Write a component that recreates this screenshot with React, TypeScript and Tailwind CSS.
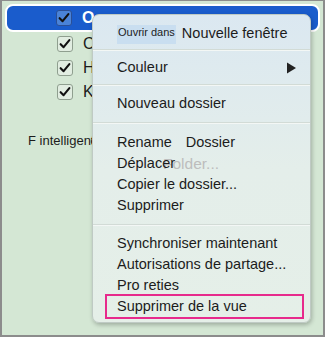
import React from 'react';

const font = { fontFamily: '"Liberation Sans", Arial, sans-serif' };

const CheckBox = ({ active = false }: { active?: boolean }) => (
  <div
    className={
      active
        ? 'w-[16px] h-[16px] rounded-[3px] border border-[#2a4f96] bg-[#4a83d8] flex items-center justify-center'
        : 'w-[16px] h-[16px] rounded-[3px] border border-[#8f9f8f] bg-[#e1ede1] flex items-center justify-center'
    }
  >
    <svg viewBox="0 0 16 16" className="w-[14px] h-[14px]">
      <path
        d="M3 8.2L6.4 11.6L13 3.6"
        fill="none"
        stroke="#111"
        strokeWidth="2.4"
        strokeLinecap="round"
        strokeLinejoin="round"
      />
    </svg>
  </div>
);

const Row = ({ label, h = 'h-[21px]' }: { label: React.ReactNode; h?: string }) => (
  <div className={`${h} flex items-center pl-[24px] text-[14.5px] text-[#1c1c1c] whitespace-nowrap`}>
    {label}
  </div>
);

const Separator = () => <div className="h-[2px] bg-[#d2dbd6] border-b border-[#f3f7f5]" />;

export default function App() {
  return (
    <div
      className="relative w-[325px] h-[337px] overflow-hidden border-2 border-t border-[#8c8c8c] bg-[#d4e7d4]"
      style={font}
    >
      <div className="flex flex-col pt-[3px] px-[3px]">
        <div className="h-[28px] rounded-[8px] border-2 border-white bg-[#1a5ccc] flex items-center pl-[49px] gap-[10px]">
          <CheckBox active />
          <span className="text-[16px] font-bold text-white">O</span>
        </div>
        {['C', 'H', 'K'].map((l) => (
          <div key={l} className="h-[24px] flex items-center pl-[52px] gap-[10px]">
            <CheckBox />
            <span className="text-[16px] text-[#1c1c1c]">{l}</span>
          </div>
        ))}
        <div className="mt-[27px] ml-[23px] w-[64px] overflow-hidden text-[13px] text-[#1c1c1c] whitespace-nowrap">
          F intelligent<span className="-ml-[4px]">oto</span>
        </div>
      </div>

      <div className="absolute left-[90px] top-[13px] w-[219px] h-[309px] rounded-[7px] border border-[#bfcac4] bg-gradient-to-b from-[#dbe8f1] via-[#e4eeea] to-[#e5efe8] shadow-[1px_2px_4px_rgba(0,0,0,0.25)] flex flex-col">
        <div className="h-[34px] flex items-end pb-[5px] pl-[24px] whitespace-nowrap">
          <span className="bg-[#c9def0] text-[11px] text-[#1c1c1c] px-[1px] pt-[1px] pb-[6px] leading-[12px]">Ouvrir dans</span>
          <span className="ml-[6px] text-[14.5px] text-[#1c1c1c] leading-[20px] pb-[1px]">Nouvelle fenêtre</span>
        </div>
        <Separator />
        <div className="h-[33px] flex items-center justify-between pl-[24px] pr-[14px]">
          <span className="text-[14.5px] text-[#1c1c1c]">Couleur</span>
          <svg viewBox="0 0 10 12" className="w-[9px] h-[12px]">
            <path d="M0 0L10 6L0 12Z" fill="#222" />
          </svg>
        </div>
        <Separator />
        <div className="h-[36px] flex flex-col justify-center">
          <Row label="Nouveau dossier" />
        </div>
        <Separator />
        <div className="flex flex-col pt-[8px] pb-[8px]">
          <Row
            label={
              <>
                Rename<span className="ml-[14px]">Dossier</span>
              </>
            }
          />
          <Row
            label={
              <>
                <span className="relative z-10">Déplacer</span>
                <span className="-ml-[12px] text-[#bdbdbd] text-[15.5px]">Folder...</span>
              </>
            }
          />
          <Row label="Copier le dossier..." />
          <Row label="Supprimer" />
        </div>
        <Separator />
        <div className="flex flex-col pt-[7px]">
          <Row label="Synchroniser maintenant" />
          <Row label="Autorisations de partage..." />
          <Row label="Pro reties" />
          <div className="ml-[12px] mt-[-2px] w-[199px] h-[25px] border-2 border-[#e72a8c] flex items-center pl-[10px] text-[14.5px] text-[#1c1c1c] whitespace-nowrap">
            Supprimer de la vue
          </div>
        </div>
      </div>
    </div>
  );
}
